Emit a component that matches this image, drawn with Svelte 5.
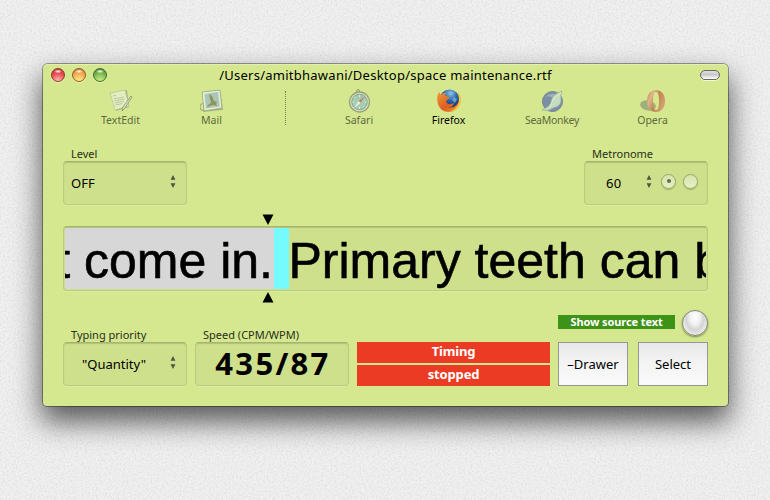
<script lang="ts">
  const title = '/Users/amitbhawani/Desktop/space maintenance.rtf';
  const typed = 't come in.';
  const remaining = 'Primary teeth can b';
  let { level = 'OFF', tempo = 60, priority = '"Quantity"', speed = '435/87' } = $props();
</script>

{#snippet stepper()}
  <svg class="stepper" viewBox="0 0 6 13" aria-hidden="true">
    <path d="M3 0 5.400 4.800H.6zM3 13 .6 8.200h4.800z" fill="#50533f" />
  </svg>
{/snippet}

<div class="desktop">
  <svg class="grain" aria-hidden="true">
    <filter id="grain">
      <feTurbulence type="fractalNoise" baseFrequency="0.55" numOctaves="2" seed="4" />
      <feColorMatrix values="0 0 0 0 0.4  0 0 0 0 0.4  0 0 0 0 0.4  .5 0 0 0 -.2" />
    </filter>
    <rect width="100%" height="100%" filter="url(#grain)" />
  </svg>

  <main class="window">
    <header class="titlebar">
      <div class="lights">
        <i class="light red"></i><i class="light amber"></i><i class="light green"></i>
      </div>
      <h1>{title}</h1>
      <button class="pill" aria-label="Toggle toolbar"></button>
    </header>

    <nav class="toolbar">
      <div class="app textedit">
        <svg viewBox="0 0 24 24">
          <path d="M4 5 18 1 20 18 7 22z" fill="#a8b782" />
          <path d="M1 4 16 1 20 17 6 21z" fill="#e3edc1" stroke="#b3c18d" stroke-width=".7" />
          <path d="m4 7 3-.6M5 10l10-2M5.500 12l10-2M6 14l9-1.800M6.500 16l7-1.400" stroke="#b0bc90" stroke-width=".8" />
          <path d="m23 8-7 11-3 3 1-4 8-11z" fill="#d8e2b7" stroke="#89956d" stroke-width=".8" />
        </svg>
        <span>TextEdit</span>
      </div>
      <div class="app mail">
        <svg viewBox="0 0 24 24">
          <circle cx="3.500" cy="18" r="3.500" fill="none" stroke="#a4b183" stroke-width="1.200" />
          <path d="m3 4 17-3 3 20-20 2z" fill="#a9b67f" />
          <path d="m2 3 18-2 2 18-18 3z" fill="#e6edce" stroke="#98a581" stroke-width=".8" />
          <path d="m4.500 5 13.500-2 1.700 14.500-13.700 2z" fill="#a8c7b8" />
          <path d="m9 5 3 2 2 5 3 1-1 2 1 2-4-1-6 2 1-2 3-2-1-4z" fill="#93935b" />
        </svg>
        <span>Mail</span>
      </div>
      <div class="separator"></div>
      <div class="app safari">
        <svg viewBox="0 0 24 24">
          <circle cx="11" cy="2" r="1.500" fill="none" stroke="#8f9d70" />
          <circle cx="12.500" cy="13" r="10" fill="#d6dfba" stroke="#97a47a" stroke-width="1.300" />
          <circle cx="12.500" cy="13" r="7.700" fill="#a3ccb7" stroke="#8ba68c" />
          <path d="M12.500 6v2m0 10v2M5.500 13h2m10 0h2M7.500 8l1 1m8 8 1 1" stroke="#e3edcd" />
          <path d="m18 7-4.500 7-2-2z" fill="#c98059" />
          <path d="m7 19 4.500-7 2 2z" fill="#eef0d9" />
        </svg>
        <span>Safari</span>
      </div>
      <div class="app firefox active">
        <svg viewBox="0 0 24 24">
          <defs>
            <radialGradient id="globe" cx=".55" cy=".2" r=".75">
              <stop offset="0" stop-color="#8ac0e9" /><stop offset=".45" stop-color="#2866a9" /><stop offset="1" stop-color="#112d6c" />
            </radialGradient>
            <linearGradient id="fox" x1="0" y1="0" x2="1" y2="1">
              <stop offset="0" stop-color="#ed9b38" /><stop offset=".55" stop-color="#df5e20" /><stop offset="1" stop-color="#f4a331" />
            </linearGradient>
          </defs>
          <circle cx="12.500" cy="10.500" r="10" fill="url(#globe)" />
          <path d="M13 3q3-1 4 1l-2 2-3-1zM17 8l3 2-2 4-3-3z" fill="#88b9dc" opacity=".7" />
          <path d="M20 3c5 4 5 12 0 17-5 4-13 4-17-1C0 15-1 8 2 3l2 3q3-3 5-2L8 7q3 0 5 2l-3 2-1 2q2 3 5 2l3-1c-1 4-4 5-7 4 6 2 12-2 12-8q0-4-2-7z" fill="url(#fox)" />
          <path d="M20 3c5 4 5 12 0 17q-4 3-8 3c6-2 10-6 10-12q0-5-2-8z" fill="#f5d044" />
        </svg>
        <span>Firefox</span>
      </div>
      <div class="app seamonkey">
        <svg viewBox="0 0 24 24">
          <circle cx="12.500" cy="12.500" r="10" fill="#7c8fa6" stroke="#728398" />
          <path d="M4.500 8q8-6 14-1l-4 3q-5-4-10-2z" fill="#9fb0ae" />
          <path d="M22 2c-8 3-11 7-11 12q-3 5-8 6l-1 1q6 2 11-2 9-2 8-9-1-4 1-8z" fill="#c5dbbf" stroke="#91ab9e" stroke-width=".6" />
          <path d="M21 4Q12 9 10 18" stroke="#e1ebc9" stroke-width="1" fill="none" />
        </svg>
        <span>SeaMonkey</span>
      </div>
      <div class="app opera">
        <svg viewBox="0 0 26 24">
          <defs>
            <linearGradient id="opera" x1="0" y1="0" x2="1" y2=".5">
              <stop offset="0" stop-color="#b87d4e" /><stop offset=".3" stop-color="#dfb78a" /><stop offset=".6" stop-color="#bf8452" /><stop offset="1" stop-color="#d2a06e" />
            </linearGradient>
          </defs>
          <ellipse cx="8" cy="16.500" rx="8" ry="5" transform="rotate(13 8 16.500)" fill="#9eb07c" />
          <path fill-rule="evenodd" d="M16 1c6 0 9 5 9 11s-3 11-9 11-9-5-9-11 3-11 9-11zm0 2c-2 0-3 3-3 9s1 9 3 9 3-3 3-9-1-9-3-9z" fill="url(#opera)" />
        </svg>
        <span>Opera</span>
      </div>
    </nav>

    <section class="settings">
      <div class="field">
        <label for="level">Level</label>
        <div id="level" class="well select"><span>{level}</span>{@render stepper()}</div>
      </div>
      <div class="field">
        <label for="metronome">Metronome</label>
        <div id="metronome" class="well metronome">
          <span class="tempo">{tempo}</span>
          {@render stepper()}
          <i class="radio checked"></i>
          <i class="radio"></i>
        </div>
      </div>
    </section>

    <section class="line">
      <svg class="marker" viewBox="0 0 12 11"><path d="M.5.500h11L6 11z" /></svg>
      <div class="well strip">
        <div class="typed"><span>{typed}</span></div>
        <div class="cursor"></div>
        <div class="remaining">{remaining}</div>
      </div>
      <svg class="marker below" viewBox="0 0 12 11"><path d="M6 0 11.500 10.500H.5z" /></svg>
    </section>

    <footer class="bottom">
      <div class="field">
        <label for="priority">Typing priority</label>
        <div id="priority" class="well select"><span class="quantity">{priority}</span>{@render stepper()}</div>
      </div>
      <div class="field speed">
        <label for="speed">Speed (CPM/WPM)</label>
        <div id="speed" class="well figure">{speed}</div>
      </div>
      <div class="status">
        <div>Timing</div>
        <div>stopped</div>
      </div>
      <div class="actions">
        <div class="source">
          <span>Show source text</span>
          <button class="round" aria-label="Show source text"></button>
        </div>
        <div class="buttons">
          <button>–Drawer</button>
          <button>Select</button>
        </div>
      </div>
    </footer>
  </main>
</div>

<style>
  .desktop {
    position: relative;
    box-sizing: border-box;
    width: 770px;
    height: 500px;
    padding: 64px 42px 0 43px;
    overflow: hidden;
    background: #f0f0f0;
    font-family: 'Noto Sans', 'Open Sans', sans-serif;
    color: #000;
  }
  .grain {
    position: absolute;
    inset: 0;
    width: 100%;
    height: 100%;
  }
  .window {
    position: relative;
    box-sizing: border-box;
    width: 685px;
    height: 342px;
    padding: 0 20px;
    border-radius: 5px 5px 4px 4px;
    background: #d5e88f;
    box-shadow:
      0 0 0 1px rgba(0, 0, 0, 0.35),
      inset 0 1px #e3f0ae,
      0 14px 28px 2px rgba(0, 0, 0, 0.62);
  }
  .titlebar {
    display: flex;
    align-items: center;
    justify-content: space-between;
    height: 22px;
    margin: 0 -12px;
  }
  .lights {
    display: flex;
    gap: 7px;
    width: 56px;
  }
  .light {
    flex: none;
    box-sizing: border-box;
    width: 14px;
    height: 14px;
    border: 1px solid #0006;
    border-radius: 50%;
    box-shadow: 0 1px #f3ffc099;
  }
  .red {
    border-color: #8d3c35;
    background: radial-gradient(ellipse 4px 2px at 50% 20%, #fff, #fff0), radial-gradient(circle at 50% 100%, #ffc2c0, #e9474a 60%, #b92e30);
  }
  .amber {
    border-color: #9a5a28;
    background: radial-gradient(ellipse 4px 2px at 50% 20%, #fff, #fff0), radial-gradient(circle at 50% 100%, #ffee90, #efaa4c 60%, #bf6628);
  }
  .green {
    border-color: #466b30;
    background: radial-gradient(ellipse 4px 2px at 50% 20%, #fff, #fff0), radial-gradient(circle at 50% 100%, #d0f48c, #79b54b 60%, #42782a);
  }
  h1 {
    margin: 0;
    font-size: 13px;
    font-weight: 400;
    line-height: 22px;
    letter-spacing: 0.25px;
    white-space: nowrap;
  }
  .pill {
    width: 20px;
    height: 10px;
    margin: 0 0 0 36px;
    padding: 0;
    border: 1px solid #666;
    border-radius: 5px;
    background: linear-gradient(#e0e0e0, #c8c8c8 45%, #fff);
    box-shadow: 0 1px #f2fbc9;
  }
  .toolbar {
    display: grid;
    grid-template-columns: 75px 107px 40px 108px 71px 136px 65px;
    margin-left: 20px;
    height: 42px;
    padding-top: 2px;
    box-sizing: border-box;
  }
  .app {
    display: flex;
    flex-direction: column;
    align-items: center;
    color: #606842;
    font-size: 10.5px;
    line-height: 14px;
  }
  .app svg {
    width: 24px;
    height: 24px;
    margin-top: 1px;
  }
  .opera svg {
    width: 26px;
  }
  .seamonkey span {
    letter-spacing: -0.3px;
  }
  .active {
    color: #000;
  }
  .separator {
    justify-self: center;
    width: 0;
    height: 34px;
    margin-top: 3px;
    border-left: 1px dotted #75804f;
  }
  .settings {
    display: flex;
    justify-content: space-between;
    height: 77px;
    padding-top: 19px;
    box-sizing: border-box;
  }
  .field {
    width: 124px;
  }
  label {
    display: block;
    height: 14px;
    padding-left: 8px;
    color: #2a2e1b;
    font-size: 11px;
    line-height: 14px;
    white-space: nowrap;
  }
  .well {
    box-sizing: border-box;
    border: 1px solid #bbcb80;
    border-top-color: #a5b471;
    border-radius: 4px;
    background: #cfe08c;
    box-shadow:
      0 1px #dcec9f,
      inset 0 1px 1px #b2c17b;
  }
  .select,
  .metronome {
    display: flex;
    align-items: center;
    height: 44px;
    padding: 0 10px 1px 7px;
    font-size: 13px;
  }
  .select {
    justify-content: space-between;
  }
  .stepper {
    width: 6px;
    height: 13px;
    margin-top: -2px;
  }
  .quantity {
    padding-left: 11px;
  }
  .metronome {
    padding: 0 9px 1px 21px;
  }
  .tempo {
    flex: 1;
    letter-spacing: 0.3px;
  }
  .metronome .stepper {
    margin-right: 9px;
  }
  .radio {
    display: grid;
    place-items: center;
    box-sizing: border-box;
    width: 15px;
    height: 15px;
    margin-top: -3px;
    border: 1px solid #9aa76e;
    border-radius: 50%;
    background: linear-gradient(#d8e4ac, #e7f1c3);
    box-shadow: 0 1px 1px #7c8a4d88;
  }
  .radio + .radio {
    margin-left: 7px;
  }
  .checked::after {
    content: '';
    width: 4px;
    height: 4px;
    border-radius: 50%;
    background: #65704b;
  }
  .line {
    height: 105px;
    padding-top: 9px;
    box-sizing: border-box;
  }
  .marker {
    display: block;
    width: 12px;
    height: 11px;
    margin: 0 0 1px 198.5px;
  }
  .below {
    margin-top: 1px;
  }
  .strip {
    display: flex;
    height: 65px;
    padding: 1px 1px 1px;
    overflow: hidden;
    font: 50px/66px 'Liberation Sans', Arial, sans-serif;
    white-space: nowrap;
    -webkit-text-stroke: 0.6px #000;
  }
  .typed {
    display: flex;
    justify-content: flex-end;
    box-sizing: border-box;
    flex: none;
    width: 209px;
    padding-right: 1px;
    overflow: hidden;
    background: #d7d7d7;
  }
  .cursor {
    flex: none;
    width: 15px;
    background: #75fbfd;
  }
  .remaining {
    flex: 1;
    margin-left: -0.5px;
    overflow: hidden;
  }
  .bottom {
    display: flex;
    gap: 8px;
    align-items: flex-end;
    height: 76px;
  }
  .speed {
    width: 154px;
  }
  .speed label {
    letter-spacing: 0;
  }
  .figure {
    height: 44px;
    padding-left: 2px;
    font-size: 31px;
    font-weight: 700;
    line-height: 41px;
    letter-spacing: 2.3px;
    text-align: center;
  }
  .status {
    display: flex;
    flex-direction: column;
    gap: 2px;
    width: 193px;
    color: #fff;
    font-size: 13px;
    font-weight: 700;
    line-height: 19px;
    letter-spacing: -0.15px;
    text-align: center;
  }
  .status div {
    height: 21px;
    background: #ec3b24;
  }
  .actions {
    width: 150px;
  }
  .source {
    display: flex;
    align-items: center;
    justify-content: space-between;
    height: 28px;
    margin-bottom: 5px;
  }
  .source span {
    width: 117px;
    height: 14px;
    margin-bottom: 2px;
    background: #3d9318;
    color: #fff;
    font-size: 11px;
    font-weight: 700;
    line-height: 14px;
    letter-spacing: -0.1px;
    text-align: center;
  }
  .round {
    width: 26px;
    height: 26px;
    padding: 0;
    border: 1px solid #858974;
    border-radius: 50%;
    background: radial-gradient(ellipse at 50% 25%, #fff 0, #f1f1f1 30%, #d4d4d4 52%, #fafafa 90%);
    box-shadow: 0 1px 2px #4d5434aa;
  }
  .buttons {
    display: flex;
    justify-content: space-between;
  }
  .buttons button {
    width: 70px;
    height: 44px;
    padding: 0 0 1px;
    border: 1px solid #969696;
    background: linear-gradient(#e8e8e8, #f3f3f3 45%, #fafafa);
    color: #000;
    font: 13px 'Noto Sans', sans-serif;
    white-space: nowrap;
  }
</style>
